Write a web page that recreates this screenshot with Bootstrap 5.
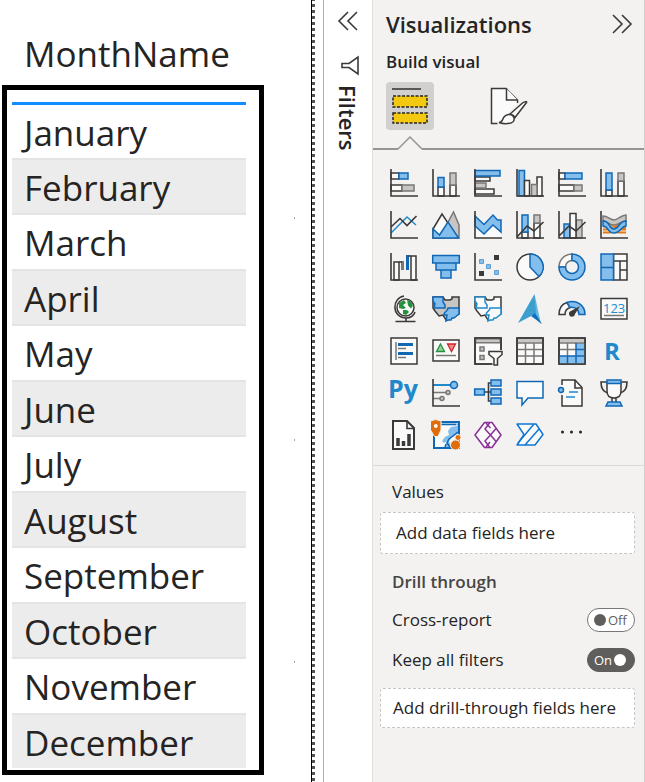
<!DOCTYPE html>
<html lang="en">
<head>
<meta charset="utf-8">
<meta name="viewport" content="width=device-width, initial-scale=1">
<title>Visualizations</title>
<link href="https://cdn.jsdelivr.net/npm/bootstrap@5.3.0/dist/css/bootstrap.min.css" rel="stylesheet">
<style>
body{font-family:"Open Sans","Noto Sans",sans-serif;color:#252423;background:#fff}
.report{background:linear-gradient(#a9a9a9 2px,transparent 2px) 294px -5px/1px 222px repeat-y;min-width:0}
.month-wrap{width:234px;margin-left:12px}
.month-table{font-size:35px;border-collapse:separate;border-spacing:0}
.month-table th,.month-table td{padding:0 0 0 12px;font-weight:400;white-space:nowrap}
.month-table thead th{height:104px;padding-top:6px;vertical-align:top;line-height:96px;border-bottom:3px solid #118dff}
.month-table tr:nth-child(odd) td{height:54px;line-height:52px;padding-top:2px}
.month-table tr:nth-child(even) td{height:57px;line-height:51px;padding-top:2px;background:#ececec;border-top:2px solid #e4e4e4;border-bottom:2px solid #e4e4e4}
.month-table tr:first-child td{height:53px;line-height:51px}
.month-table tr:last-child td{height:55px;border-bottom:0}
.frame-mark{top:85px;left:-10px;right:-18px;bottom:-7px;border:5px solid #000;pointer-events:none}
.gutter{width:12px;border-left:1px solid #000;background:repeating-linear-gradient(#555 0 1px,#fff 1px 4px,#555 4px 6px) 0 0/3px 100% no-repeat}
.filters{width:50px;border-left:1px solid #b3b0ad;border-right:1px solid #e1dfdd;padding-top:11px}
.filters-name{writing-mode:vertical-rl;font-size:22px;line-height:24px;font-weight:600}
.viz{width:272px;background:#f3f2f1;border-right:1px solid #d2d0ce}
.viz-head{padding:10px 12px 0 13px}
.bare{background:none;border:0;padding:0;display:block;color:inherit}
.viz-title{font-size:22px;line-height:28px;font-weight:600}
.viz-sub{font-size:17px;line-height:24px;font-weight:600}
.tab-tile{width:48px;height:48px;border-radius:4px}
.tab-on{background:#d2d0ce}
.tab-rule{height:16px}
.rule-lead{width:25px}
.rule-line{border-bottom:2px solid #979593}
.gallery{grid-template-columns:repeat(auto-fill,42px);padding:12px 0 9px 10px;border-bottom:1px solid #dcdad8}
.gallery button{width:42px;height:42px;padding:7px}
.gallery svg,.tab-tile svg,.bare svg{display:block;overflow:visible}
.field-text{font-size:17px;line-height:24px;padding:14px 9px 0 7px}
.field-row{padding-left:12px;margin-top:14px}
.well{background:#fff;border:1px dashed #c8c6c4;border-radius:3px}
.well-a{height:42px;padding-left:15px}
.well-b{height:40px;padding-left:12px}
.field-head{color:#484644;font-weight:600}
.pill{width:48px;height:24px;border-radius:12px;border:1px solid #797775;background:#fff;font-size:13px;line-height:22px;color:#605e5c;padding:0 6px;gap:2px}
.pill input{appearance:none;width:12px;height:12px;border-radius:50%;background:#605e5c;margin:0}
.pill-on{background:#605e5c;border-color:#605e5c;color:#fff}
.pill-on input{background:#fff}
.a{fill:none;stroke:#3b3a39;stroke-width:1.6}
.w{fill:#fafafa;stroke:#3b3a39;stroke-width:1.5}
.b{fill:#83beec;stroke:#1068b5;stroke-width:1.5}
.g{fill:#c8c6c4;stroke:#7a7775;stroke-width:1.5}
.bl{fill:none;stroke:#1e8bcd;stroke-width:1.5}
.gl{fill:none;stroke:#7a7775;stroke-width:1.5}
.script-mark{font-family:"Open Sans",sans-serif;font-weight:700;fill:#2088cb}
</style>
<script src="https://cdn.jsdelivr.net/npm/bootstrap@5.3.0/dist/js/bootstrap.bundle.min.js"></script>
</head>
<body>
<div class="d-flex min-vh-100">
<main class="report flex-grow-1">
 <div class="month-wrap position-relative">
  <table class="month-table w-100">
   <thead><tr><th scope="col">MonthName</th></tr></thead>
   <tbody>
    <tr><td>January</td></tr><tr><td>February</td></tr><tr><td>March</td></tr><tr><td>April</td></tr>
    <tr><td>May</td></tr><tr><td>June</td></tr><tr><td>July</td></tr><tr><td>August</td></tr>
    <tr><td>September</td></tr><tr><td>October</td></tr><tr><td>November</td></tr><tr><td>December</td></tr>
   </tbody>
  </table>
  <div class="frame-mark position-absolute"></div>
 </div>
</main>
<div class="gutter flex-shrink-0"></div>
<aside class="filters flex-shrink-0 d-flex flex-column align-items-center" aria-label="Filters">
 <button class="bare" type="button" aria-label="Expand filters"><svg width="20" height="20" viewBox="0 0 20 20"><path class="a" d="M10 1 1 10l9 9M19 1l-9 9 9 9"/></svg></button>
 <button class="bare mt-4 ms-1" type="button" aria-label="Filter"><svg width="20" height="22" viewBox="0 0 20 22"><path class="a" d="M18 2v17l-9-6.500H2v-4h7z"/></svg></button>
 <div class="filters-name mt-2">Filters</div>
</aside>
<aside class="viz flex-shrink-0">
 <div class="viz-head">
  <div class="d-flex align-items-center justify-content-between">
   <h1 class="viz-title m-0">Visualizations</h1>
   <button class="bare" type="button" aria-label="Collapse pane"><svg width="20" height="20" viewBox="0 0 20 20"><path class="a" d="M1 1l9 9-9 9M10 1l9 9-9 9"/></svg></button>
  </div>
  <h2 class="viz-sub m-0 mt-2 pt-1">Build visual</h2>
  <div class="d-flex mt-2 gap-5">
   <button class="bare tab-tile tab-on" type="button" aria-label="Build visual"><svg width="48" height="48" viewBox="0 0 48 48"><path class="a" d="M6 7h29"/><g fill="#f2c811" stroke="#252423" stroke-width="1.500" stroke-dasharray="3 1.500"><path d="M7 14h34v11H7zM7 31h34v10H7z"/></g></svg></button>
   <button class="bare tab-tile" type="button" aria-label="Format visual"><svg width="48" height="48" viewBox="0 0 48 48"><path class="w" d="M15.500 41.500h-6v-35H24L35.500 18v3"/><path class="w" d="M24.500 6.500V18h11"/><path class="w" d="m27.500 32.500 13-11.500c2-1.500 5-2 4-.500L33 35.500c-1-2-3-3-5.500-3z"/><path class="w" d="M17 40.500c4 0 3-3 5-5.500 2-3 7-3.500 9-1s1.500 6-2 7c-4 1-8 1-12-.500z"/></svg></button>
  </div>
 </div>
 <div class="tab-rule d-flex mt-1"><i class="rule-line rule-lead"></i><svg width="24" height="16" viewBox="0 0 24 16" class="flex-shrink-0 overflow-visible"><path d="M0 15 12 3l12 12" fill="none" stroke="#979593" stroke-width="1.500"/></svg><i class="rule-line flex-grow-1"></i></div>
 <div class="gallery d-grid">
  <button class="bare" aria-label="Stacked bar chart"><svg viewBox="0 0 28 28"><path class="w" d="M1 4h8v6H1zM1 16h11v6H1z"/><path class="b" d="M9 4h9v6H9z"/><path class="g" d="M12 16h12v6H12z"/><path class="a" d="M1 0v27h27"/></svg></button>
  <button class="bare" aria-label="Stacked column chart"><svg viewBox="0 0 28 28"><path class="w" d="M6 18h6v9H6zM18 16h6v11h-6z"/><path class="b" d="M6 8.500h6V18H6z"/><path class="g" d="M18 4h6v12h-6z"/><path class="a" d="M1 0v27h27"/></svg></button>
  <button class="bare" aria-label="Clustered bar chart"><svg viewBox="0 0 28 28"><path class="w" d="M1 8h15v4H1zM1 20h19v5H1z"/><path class="b" d="M1 1.500h25V7H1z"/><path class="g" d="M1 14h11v5H1z"/><path class="a" d="M1 0v27h27"/></svg></button>
  <button class="bare" aria-label="Clustered column chart"><svg viewBox="0 0 28 28"><path class="b" d="M3 1.500h5.500V27H3z"/><path class="w" d="M8.500 11.500h5V27h-5zM21 8h5v19h-5z"/><path class="g" d="M15.500 15.500H21V27h-5.500z"/><path class="a" d="M1 0v27h27"/></svg></button>
  <button class="bare" aria-label="100% stacked bar chart"><svg viewBox="0 0 28 28"><path class="w" d="M1 4h6v6H1zM1 16h15v6H1z"/><path class="b" d="M7 4h17v6H7z"/><path class="g" d="M16 16h8v6h-8z"/><path class="a" d="M1 0v27h27"/></svg></button>
  <button class="bare" aria-label="100% stacked column chart"><svg viewBox="0 0 28 28"><path class="w" d="M6 21h6v6H6zM18 12h6v15h-6z"/><path class="b" d="M6 4h6v17H6z"/><path class="g" d="M18 4h6v8h-6z"/><path class="a" d="M1 0v27h27"/></svg></button>

  <button class="bare" aria-label="Line chart"><svg viewBox="0 0 28 28"><path class="bl" d="M1 22 17 6l9 8"/><path class="a" d="m1 16 9-8.500 7 7L26.500 5M1 0v27h27"/></svg></button>
  <button class="bare" aria-label="Area chart"><svg viewBox="0 0 28 28"><path class="w" d="M1 18 10 3l8 12-5 12H1z"/><path class="g" d="m15 13 6.500-12L27 14v13H15z"/><path class="b" d="m1 18 6.500 6L16 11l10.500 16H1z"/></svg></button>
  <button class="bare" aria-label="Stacked area chart"><svg viewBox="0 0 28 28"><path fill="#fafafa" d="M1 15l9 8 9-9 8 7v6H1z"/><path class="b" d="m1 5 9 8.500L19 4l4.500 5H27v12l-8-7-9 9-9-8z"/><path class="a" d="M1 0v27h27"/></svg></button>
  <button class="bare" aria-label="Line and stacked column chart"><svg viewBox="0 0 28 28"><path class="w" d="M6 21h6v6H6zM18 12h6v15h-6z"/><path class="b" d="M6 4h6v17H6z"/><path class="g" d="M18 4h6v8h-6z"/><path class="a" d="m1 26 10-11 7 5 9.500-9M1 0v27h27"/></svg></button>
  <button class="bare" aria-label="Line and clustered column chart"><svg viewBox="0 0 28 28"><path class="b" d="M6 13h6v14H6z"/><path class="g" d="M18 9h6v18h-6z"/><path class="w" d="M12 2.500h6V27h-6z"/><path class="a" d="m1 25 10-10 7 5 9.500-9M1 0v27h27"/></svg></button>
  <button class="bare" aria-label="Ribbon chart"><svg viewBox="0 0 28 28"><path d="M3 20h7c5-1 6-4 10-5h6M3 14h5c4 0 6 6 11 6h7" fill="none" stroke="#e07b1a" stroke-width="5"/><path d="M3 20h7c5-1 6-4 10-5h6M3 14h5c4 0 6 6 11 6h7" fill="none" stroke="#f8c68b" stroke-width="1.500"/><path class="g" d="M3 5c5 0 7 4 11 4s7-5 12-5v6c-5 0-7 4-12 4S8 10 3 10z"/><path class="b" d="M3 10c7 0 6 8 11 8s5-8 12-8v5c-5 0-5 7-12 7S9 15 3 15z"/><path class="a" d="M1 0v27h27"/></svg></button>

  <button class="bare" aria-label="Waterfall chart"><svg viewBox="0 0 28 28"><path class="w" d="M4 9h5v18H4zM21 3h5v24h-5z"/><path fill="#7a7775" d="M11 8h3v9h-3z"/><path fill="#1068b5" d="M16 2h3v15h-3z"/><path class="a" d="M9 9h3M18 3h3M1 0v27h27"/></svg></button>
  <button class="bare" aria-label="Funnel chart"><svg viewBox="0 0 28 28"><path class="b" d="M.7 2.500h26.600V10H.7zM4 10h20v7H4zM9 17h10v8H9z"/></svg></button>
  <button class="bare" aria-label="Scatter chart"><svg viewBox="0 0 28 28"><path fill="#3b3a39" d="M20 2h5v5h-5zM5 18h5v5H5z"/><path fill="#83beec" stroke="#5f9fd2" d="M5.500 6.500h4v4h-4zM12.500 11.500h4v4h-4zM20.500 17.500h4v4h-4z"/><path class="a" d="M1 0v27h27"/></svg></button>
  <button class="bare" aria-label="Pie chart"><svg viewBox="0 0 28 28"><circle class="w" cx="14" cy="14" r="13"/><path class="b" d="M14 1v13l9 9.500A13 13 0 0 0 14 1z"/></svg></button>
  <button class="bare" aria-label="Donut chart"><svg viewBox="0 0 28 28"><path fill="#fafafa" stroke="#7a7775" stroke-width="1.500" d="M14 1A13 13 0 0 0 1 14h6.500A6.500 6.500 0 0 1 14 7.500z"/><path class="b" d="M14 1A13 13 0 1 1 1 14h6.500A6.500 6.500 0 1 0 14 7.500z"/></svg></button>
  <button class="bare" aria-label="Treemap"><svg viewBox="0 0 28 28"><path class="w" d="M13.500 1H27v26H13.500zM13.500 8H27M20 8v19M20 17h7"/><path class="b" d="M1 1h12.500v26H1zM1 14.500h12.500"/></svg></button>

  <button class="bare" aria-label="Map"><svg viewBox="0 0 28 28"><circle class="w" cx="15.500" cy="12.500" r="8.500"/><path fill="#27913f" d="M9 8l5-3 2 3-3 2 3 3-3 1-4-1zM17 4.500l4 2 2 4-2 3-3-3zM13 15h4l2 2-3 3-3-1z"/><path class="a" d="M14 1C2 3 1 22 16 23c5 0 8-3 9-6M16 23v3M5.500 26.500h20"/></svg></button>
  <button class="bare" aria-label="Filled map"><svg viewBox="0 0 28 28"><path fill="#c8c6c4" stroke="#3b3a39" stroke-width="1.500" d="M1 2h10l2 3h5l2-1V2h7v17l-4 2-5 3-4 1-3-5-4 1-4-5-2-3z"/><path class="b" d="M1 2h10v5l2 3v3H2l1-4-2-3zM16 13h11v6l-5 4h-2l-1 2h-3l-2 1 1-6h-3c0-5 4-3 4-7z"/></svg></button>
  <button class="bare" aria-label="Shape map"><svg viewBox="0 0 28 28"><path class="w" d="M1 2h10l2 3h5l2-1V2h7v17l-4 2-5 3-4 1-3-5-4 1-4-5-2-3z"/><path fill="#fafafa" stroke="#1e8bcd" stroke-width="1.500" d="M1 2h10v5l2 3v3H2l1-4-2-3zM16 13h11v6l-5 4h-2l-1 2h-3l-2 1 1-6h-3c0-5 4-3 4-7z"/></svg></button>
  <button class="bare" aria-label="Azure map"><svg viewBox="0 0 28 28"><path fill="#3c9fd0" d="M18.500-1 2 28l13-7z"/><path fill="#62b8dd" d="M18.500-1 16 20l9 9z"/><path fill="#3c9fd0" d="M18.500-1 13 22l7-4z"/><path fill="#0f6fc0" d="m15 21 4-3 7 11z"/></svg></button>
  <button class="bare" aria-label="Gauge"><svg viewBox="0 0 28 28"><path class="w" d="M1 19.500C1 13 4 9 9 7.500l3 5c-3 1-5 3-5 7z"/><path class="b" d="M9 7.500c9-3 18 2 18 12h-6c0-5-4-8-9-7z"/><path fill="#3b3a39" d="m22 11-5 8a3 3 0 1 1-4-3z"/></svg></button>
  <button class="bare" aria-label="Card"><svg viewBox="0 0 28 28"><path class="w" d="M1 3.500h26v20.500H1z"/><path class="gl" d="M4 20.500h20"/><text x="3" y="18" font-family="Open Sans" font-size="13" fill="#1e8bcd">123</text></svg></button>

  <button class="bare" aria-label="Multi-row card"><svg viewBox="0 0 28 28"><path class="w" d="M1 1h26v26H1z"/><path class="gl" d="M6 5v18M8 11.500h8M8 20.500h8"/><path stroke="#1068b5" stroke-width="3" d="M8 7.500h15M8 16.500h15"/></svg></button>
  <button class="bare" aria-label="KPI"><svg viewBox="0 0 28 28"><path class="w" d="M1 3h26v21H1z"/><path class="gl" d="M4 18.500h20"/><path fill="#92d29b" stroke="#27913f" stroke-width="1.300" d="m8.500 7 4 7.500h-8z"/><path fill="#f28b84" stroke="#c92a2a" stroke-width="1.300" d="M15.500 7h8l-4 7.500z"/></svg></button>
  <button class="bare" aria-label="Slicer"><svg viewBox="0 0 28 28"><path class="w" d="M1 1h26v26H1z"/><path class="g" d="M1.700 1.700h24.600v4H1.700z"/><path class="a" d="M1 1h26v26H1z"/><path class="g" d="M6 10h4v4H6zM6 18.500h4v4H6z"/><path fill="#f3f2f1" d="M13.500 13h17v17h-12v-7l-5-4z"/><path class="w" d="M15 14.500h13v3l-4.500 4V28H20v-6.500l-5-4z"/></svg></button>
  <button class="bare" aria-label="Table"><svg viewBox="0 0 28 28"><path class="w" d="M1 1h26v26H1z"/><path fill="#c8c6c4" d="M2 2h24v3.500H2z"/><path class="gl" d="M9.500 6v20M18 6v20M2 12.500h24M2 19h24M2 6h24"/><path class="a" d="M1 1h26v26H1z"/></svg></button>
  <button class="bare" aria-label="Matrix"><svg viewBox="0 0 28 28"><path class="w" d="M1 1h26v26H1z"/><path fill="#83beec" d="M18 6h9v21H1v-8h17z"/><path fill="#c8c6c4" d="M2 2h24v3.500H2z"/><path class="gl" d="M9.500 6v13M2 12.500h16M2 6h24"/><path fill="none" stroke="#1068b5" stroke-width="1.500" d="M18 6v20M1 19h25M9.500 19v7M18 12.500h8"/><path class="a" d="M1 1h26v26H1z"/></svg></button>
  <button class="bare" aria-label="R script visual"><svg viewBox="0 0 28 28"><text class="script-mark" x="4" y="23" font-size="24">R</text></svg></button>

  <button class="bare" aria-label="Python visual"><svg viewBox="0 0 28 28"><text class="script-mark" x="-2" y="19" font-size="25" font-weight="600">Py</text></svg></button>
  <button class="bare" aria-label="Key influencers"><svg viewBox="0 0 28 28"><path fill="none" stroke="#1e8bcd" stroke-width="2" d="M1 6h19"/><path class="gl" d="M1 13.500h14M1 19.500h8"/><circle class="b" cx="22" cy="6" r="3.500"/><circle class="g" cx="16" cy="13.500" r="2"/><circle class="g" cx="10" cy="19.500" r="2"/><path class="a" d="M1 0v27h27"/></svg></button>
  <button class="bare" aria-label="Decomposition tree"><svg viewBox="0 0 28 28"><path class="a" d="M10 13h7M17 4h-2.500v18H17"/><path class="b" d="M.7 10h9.600v6H.7zM17 1h10v6H17zM17 10h10v6H17zM17 19h10v6H17z"/></svg></button>
  <button class="bare" aria-label="Q and A"><svg viewBox="0 0 28 28"><path fill="#fafafa" stroke="#1068b5" stroke-width="1.500" d="M1 2.500h26V19H12l-6 7v-7H1z"/></svg></button>
  <button class="bare" aria-label="Smart narrative"><svg viewBox="0 0 28 28"><path class="w" d="M4 6V1h13l7 7.500V27H4V16"/><path class="a" d="M17 1v8h7"/><path class="bl" d="M11 13h9M8 18h9"/><circle class="b" cx="3" cy="11" r="2.500"/></svg></button>
  <button class="bare" aria-label="Goals"><svg viewBox="0 0 28 28"><path class="a" d="M7 3H1c0 7 2 10 7 11M21 3h6c0 7-2 10-7 11"/><path class="w" d="M7 4h14v8c0 5-3 7-7 7s-7-2-7-7zM12 19v4M16 19v4"/><path class="b" d="M7 1h14v3.500H7zM8 23h12l2 4H6z"/></svg></button>

  <button class="bare" aria-label="Paginated report"><svg viewBox="0 0 28 28"><path fill="#fafafa" stroke="#3b3a39" stroke-width="2" d="M3 0h14l7 7v21H3z"/><path class="a" d="M17 0v7.500h7"/><path stroke="#3b3a39" stroke-width="3.500" d="M8 25v-8M13.500 25v-5M19 25V13"/></svg></button>
  <button class="bare" aria-label="ArcGIS map"><svg viewBox="0 0 28 28"><path fill="#fafafa" stroke="#1068b5" stroke-width="2" d="M2 1h25v26H2z"/><path fill="#83beec" d="M10 2.500h16V13l-6 3-3 4 2 6h-6l2-6-3 2-2-2 3-4 4-2-1-4 3-4 6-1V4H10z"/><path fill="none" stroke="#1068b5" stroke-width="1.500" d="M26 11l-5 4-4 3-2 4 3 4M9 3.500h15M13 26l1-3"/><path fill="#e06c0a" stroke="#f3f2f1" d="M-1.500 0q5-3 10.500 0v9L6 15.500H2.500L-1.500 9z"/><circle cx="3.800" cy="5" r="2" fill="#fafafa"/><circle cx="26" cy="16.500" r="3" fill="#e06c0a" stroke="#f3f2f1"/><circle cx="23.500" cy="24" r="5" fill="#e06c0a" stroke="#f3f2f1"/></svg></button>
  <button class="bare" aria-label="Power Apps"><svg viewBox="0 0 28 28" fill="#fafafa" stroke="#893096" stroke-width="1.500" stroke-linejoin="round"><path d="M10.500 1.500H18L27 14l-9 12.500h-7.500L1 14z"/><path fill="none" d="M15.500 2 11 8l5.500 6-5.500 6 4.500 6M12 2l4.500 5M22 7.500 16.500 14l6 7M16 21l-4 5"/></svg></button>
  <button class="bare" aria-label="Power Automate"><svg viewBox="0 0 28 28" fill="#fafafa" stroke="#0f77d4" stroke-width="1.500" stroke-linejoin="round"><path d="M1 3h19l7 10.500L19 24H1l7-10.500z"/><path fill="none" d="M18 3 2 22M23 8 9 24"/></svg></button>
  <button class="bare" aria-label="More visuals"><svg viewBox="0 0 28 28"><g fill="#252423"><circle cx="4.500" cy="11" r="1.500"/><circle cx="13.500" cy="11" r="1.500"/><circle cx="22.500" cy="11" r="1.500"/></g></svg></button>
 </div>
 <section class="field-text">
  <div class="ms-1 ps-2">Values</div>
  <div class="well well-a d-flex align-items-center mt-2">Add data fields here</div>
  <div class="field-head ms-1 ps-2 mt-3">Drill through</div>
  <div class="field-row d-flex align-items-center justify-content-between"><label for="cross">Cross-report</label><label class="pill d-flex align-items-center"><input id="cross" type="checkbox" role="switch"><span>Off</span></label></div>
  <div class="field-row d-flex align-items-center justify-content-between mt-3"><label for="keep">Keep all filters</label><label class="pill pill-on d-flex align-items-center"><span>On</span><input id="keep" type="checkbox" role="switch" checked></label></div>
  <div class="well well-b d-flex align-items-center mt-3">Add drill-through fields here</div>
 </section>
</aside>
</div>
</body>
</html>
